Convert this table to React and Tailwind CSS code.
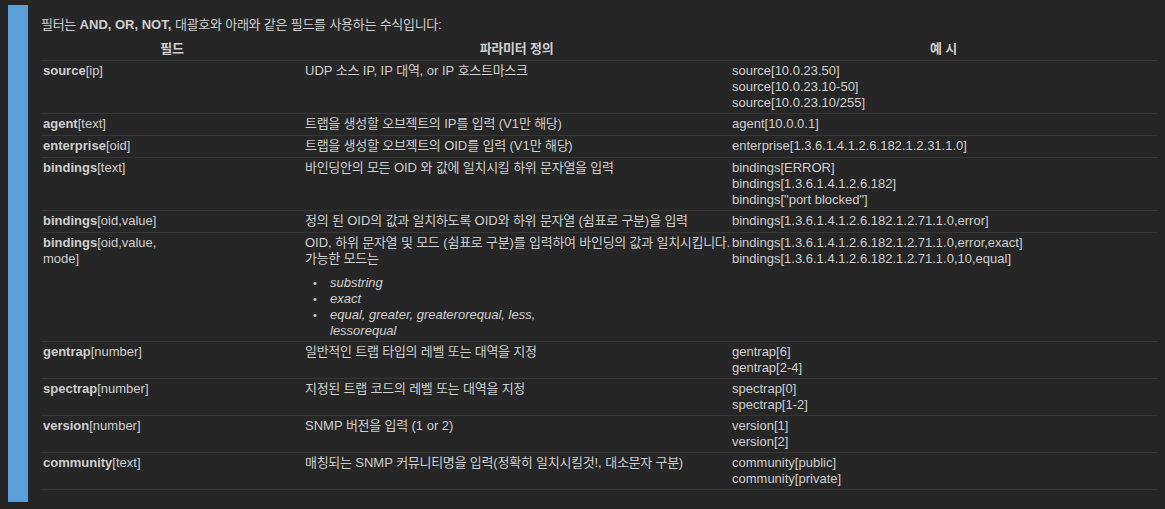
import React from "react";

const HANGUL = /([\u1100-\u11FF\u3131-\u318E\uAC00-\uD7A3]+)/;

function K({ t }) {
  const parts = t.split(HANGUL);
  return (
    <>
      {parts.map((p, i) =>
        i % 2 === 1 ? (
          <span key={i} className="tracking-[-0.3px]">
            {p}
          </span>
        ) : (
          <React.Fragment key={i}>{p}</React.Fragment>
        )
      )}
    </>
  );
}

const rows = [
  { name: "source", arg: "[ip]", desc: "UDP 소스 IP, IP 대역, or IP 호스트마스크", ex: ["source[10.0.23.50]", "source[10.0.23.10-50]", "source[10.0.23.10/255]"] },
  { name: "agent", arg: "[text]", desc: "트랩을 생성할 오브젝트의 IP를 입력 (V1만 해당)", ex: ["agent[10.0.0.1]"] },
  { name: "enterprise", arg: "[oid]", desc: "트랩을 생성할 오브젝트의 OID를 입력 (V1만 해당)", ex: ["enterprise[1.3.6.1.4.1.2.6.182.1.2.31.1.0]"] },
  { name: "bindings", arg: "[text]", desc: "바인딩안의 모든 OID 와 값에 일치시킬 하위 문자열을 입력", ex: ["bindings[ERROR]", "bindings[1.3.6.1.4.1.2.6.182]", 'bindings["port blocked"]'] },
  { name: "bindings", arg: "[oid,value]", desc: "정의 된 OID의 값과 일치하도록 OID와 하위 문자열 (쉼표로 구분)을 입력", ex: ["bindings[1.3.6.1.4.1.2.6.182.1.2.71.1.0,error]"] },
  { mode: true },
  { name: "gentrap", arg: "[number]", desc: "일반적인 트랩 타입의 레벨 또는 대역을 지정", ex: ["gentrap[6]", "gentrap[2-4]"] },
  { name: "spectrap", arg: "[number]", desc: "지정된 트랩 코드의 레벨 또는 대역을 지정", ex: ["spectrap[0]", "spectrap[1-2]"] },
  { name: "version", arg: "[number]", desc: "SNMP 버전을 입력 (1 or 2)", ex: ["version[1]", "version[2]"] },
  { name: "community", arg: "[text]", desc: "매칭되는 SNMP 커뮤니티명을 입력(정확히 일치시킬것!, 대소문자 구분)", ex: ["community[public]", "community[private]"] },
];

const rowCls =
  "grid grid-cols-[262px_427px_427px] min-h-[22px] pt-[2px] pb-[2px] border-b border-[#363636]";

function Bullet({ children }) {
  return (
    <li className="flex">
      <span className="w-[25px] shrink-0 pl-[8px] text-[11px]">•</span>
      <span className="italic">{children}</span>
    </li>
  );
}

export default function App() {
  return (
    <div className="w-[1165px] h-[509px] bg-[#262626] pt-[5px] pl-2 text-[13px] leading-4 text-[#cfcfcf] font-['Liberation_Sans','Noto_Sans_CJK_KR',sans-serif] overflow-hidden">
      <div className="h-[497px] border-l-[20px] border-[#5a9fd8] pl-[13px] pr-2 pt-3">
        <p>
          <K t="필터는 " />
          <b>AND, OR, NOT,</b>
          <K t=" 대괄호와 아래와 같은 필드를 사용하는 수식입니다:" />
        </p>
        <div className="mt-[6px]">
          <div className="grid grid-cols-[262px_427px_427px] pt-[2px] pb-[3px] border-b border-[#363636] font-bold text-center">
            <div>
              <K t="필드" />
            </div>
            <div>
              <K t="파라미터 정의" />
            </div>
            <div>
              <K t="예 시" />
            </div>
          </div>
          {rows.map((r, i) =>
            r.mode ? (
              <div key={i} className={rowCls}>
                <div className="pl-[2px]">
                  <b>bindings</b>[oid,value,
                  <br />
                  mode]
                </div>
                <div className="pl-[2px]">
                  <div className="whitespace-nowrap">
                    <K t="OID, 하위 문자열 및 모드 (쉼표로 구분)를 입력하여 바인딩의 값과 일치시킵니다." />
                  </div>
                  <div>
                    <K t="가능한 모드는" />
                  </div>
                  <ul className="mt-2">
                    <Bullet>substring</Bullet>
                    <Bullet>exact</Bullet>
                    <Bullet>
                      equal, greater, greaterorequal, less,
                      <br />
                      lessorequal
                    </Bullet>
                  </ul>
                </div>
                <div className="pl-[2px]">
                  <div>bindings[1.3.6.1.4.1.2.6.182.1.2.71.1.0,error,exact]</div>
                  <div>bindings[1.3.6.1.4.1.2.6.182.1.2.71.1.0,10,equal]</div>
                </div>
              </div>
            ) : (
              <div key={i} className={rowCls}>
                <div className="pl-[2px]">
                  <b>{r.name}</b>
                  {r.arg}
                </div>
                <div className="pl-[2px]">
                  <K t={r.desc} />
                </div>
                <div className="pl-[2px]">
                  {r.ex.map((e, j) => (
                    <div key={j}>{e}</div>
                  ))}
                </div>
              </div>
            )
          )}
        </div>
      </div>
    </div>
  );
}
